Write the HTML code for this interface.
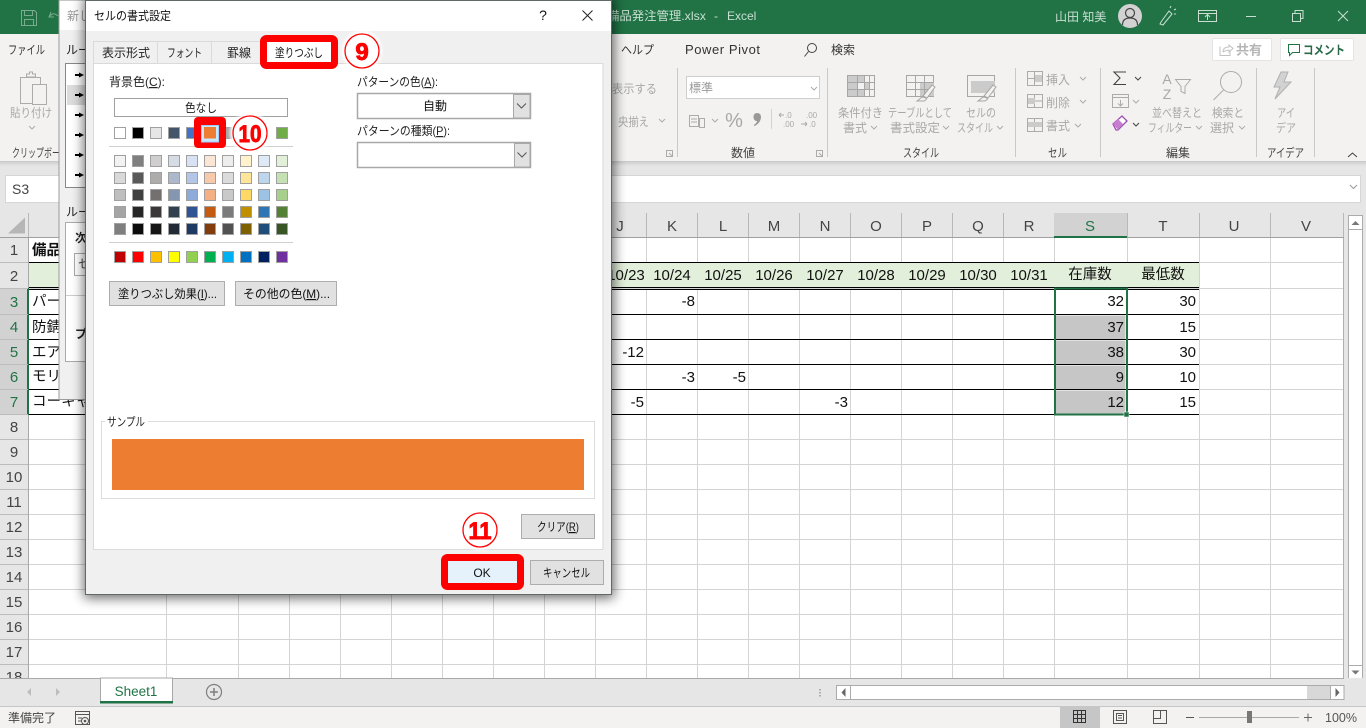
<!DOCTYPE html>
<html lang="ja"><head><meta charset="utf-8"><title>Excel</title>
<style>
html,body{margin:0;padding:0;width:1366px;height:728px;overflow:hidden;background:#e6e6e6}
svg{display:block;position:absolute;left:0;top:0}
text{font-family:"Liberation Sans","Noto Sans CJK JP",sans-serif;font-size:12px;fill:#222}
.m{text-anchor:middle}.e{text-anchor:end}
.d{fill:#a8a8a8}.g{font-size:12px;fill:#444}
.c{font-size:14.5px;fill:#111}.n{font-size:15px;fill:#111}
.rh{font-size:15px;fill:#444;text-anchor:middle}.sel{fill:#217346}
.ch{font-size:15px;fill:#444;text-anchor:middle}
.ic{fill:none;stroke:#ababab;stroke-width:1}
.cv{fill:none;stroke:#ababab;stroke-width:1}
.num{font-weight:bold;fill:#f00;stroke:#f00;stroke-width:.9;text-anchor:middle}
</style></head><body>
<svg width="1366" height="728" viewBox="0 0 1366 728" xmlns="http://www.w3.org/2000/svg">
<defs>
<filter id="sh" x="-10%" y="-10%" width="120%" height="120%"><feGaussianBlur stdDeviation="6"/></filter>
<filter id="ha" x="-30%" y="-30%" width="160%" height="160%"><feGaussianBlur stdDeviation="1.5"/></filter>
<linearGradient id="rs" x1="0" y1="0" x2="0" y2="1"><stop offset="0" stop-color="#c9c9c9"/><stop offset="1" stop-color="#e6e6e6"/></linearGradient>
</defs>

<rect width="1366" height="728" fill="#e6e6e6"/>
<rect width="1366" height="34" fill="#217346"/>
<rect y="34" width="1366" height="127" fill="#f3f2f1"/>
<rect y="161" width="1366" height="5" fill="url(#rs)"/>

<!-- title bar -->
<path d="M21.5 10.5h13l2 2v13h-15zM24.5 10.5v5h8v-5M24.500 25.500v-6h9v6" fill="none" stroke="#79ab8e"/>
<path d="M51 12l-2 5h5M49 17c3-4 6-4 9-1" fill="none" stroke="#79ab8e"/>
<text x="607" y="20" style="fill:#c9dfd2" textLength="99" lengthAdjust="spacingAndGlyphs">備品発注管理.xlsx</text>
<text x="714" y="20" style="fill:#c9dfd2">-</text>
<text x="727" y="20" style="fill:#c9dfd2">Excel</text>
<text x="1055" y="21" style="fill:#c9dfd2">山田 知美</text>
<circle cx="1130" cy="16" r="12" fill="#d2d2d2"/>
<circle cx="1130" cy="13" r="4.5" fill="none" stroke="#444" stroke-width="1.2"/>
<path d="M1122.5 25c0-5 3-7 7.5-7s7.500 2 7.500 7" fill="none" stroke="#444" stroke-width="1.2"/>
<path d="M1161 22l8-11 3 3-9 11-3-1zM1170 8l1-2M1174 10l2-1M1174 14h2" fill="none" stroke="#c9dfd2"/>
<path d="M1198.500 10.500h18v11h-18zM1198.500 13.500h18M1207.500 20v-5M1205 17l2.500-2.500 2.500 2.500" fill="none" stroke="#c9dfd2"/>
<path d="M1246 16.500h10" stroke="#c9dfd2" fill="none"/>
<path d="M1292.500 13.500h8v8h-8zM1295 13v-2.500h8v8h-2.500" stroke="#c9dfd2" fill="none"/>
<path d="M1338 11l10 10M1348 11l-10 10" stroke="#c9dfd2" fill="none"/>

<!-- tabs -->
<text x="8" y="54" style="fill:#333" textLength="37" lengthAdjust="spacingAndGlyphs">ファイル</text>
<text x="621" y="54" style="fill:#333" textLength="33" lengthAdjust="spacingAndGlyphs">ヘルプ</text>
<text x="685" y="54" style="font-size:13px;fill:#333" textLength="75">Power Pivot</text>
<circle cx="812" cy="48" r="4.500" fill="none" stroke="#444"/><path d="M808.500 51.500l-4 5" stroke="#444" fill="none"/>
<text x="831" y="54" style="fill:#333">検索</text>
<rect x="1212.500" y="38.500" width="59" height="22" rx="1" fill="#fff" stroke="#e4e4e4"/>
<path d="M1220 46.500v9h10v-4M1223 52c0-4 3-5 6-5v-2l4 3.500-4 3.500v-2c-3 0-4 1-6 2" fill="none" stroke="#c2c2c2"/>
<text x="1236" y="54.500" style="font-weight:bold;fill:#b5b5b5;font-size:13px">共有</text>
<rect x="1280.500" y="38.500" width="73" height="22" rx="1" fill="#fff" stroke="#e4e4e4"/>
<path d="M1288.500 44.500h11v8h-7l-3 3v-3h-1z" fill="none" stroke="#217346"/>
<text x="1303" y="54.500" style="font-weight:bold;fill:#2a6a48;font-size:12.500px" textLength="42" lengthAdjust="spacingAndGlyphs">コメント</text>

<!-- ribbon left -->
<path d="M20.500 77.500h20v26h-20z" class="ic"/><path d="M26.500 77v-3h3v-2h3v2h3v3z" class="ic"/>
<rect x="32.500" y="84.500" width="14" height="20" fill="#f3f2f1" stroke="#ababab"/>
<text x="10" y="117" class="d" textLength="42" lengthAdjust="spacingAndGlyphs">貼り付け</text>
<path d="M29 126l3 3 3-3" class="cv"/>
<text x="12" y="157" class="g" textLength="56" lengthAdjust="spacingAndGlyphs">クリップボード</text>

<!-- ribbon middle -->
<text x="612" y="93" class="d" textLength="45" lengthAdjust="spacingAndGlyphs">表示する</text>
<text x="618" y="126" class="d" textLength="31" lengthAdjust="spacingAndGlyphs">央揃え</text>
<path d="M659 119l3 3 3-3" class="cv"/>
<path d="M666.500 150.500h6v6h-6zM669 153l3 3" class="ic"/>
<path d="M677.500 68v89M827.500 68v89M1015.500 68v89M1100.500 68v89M1256.500 68v89M1314.500 68v89" stroke="#c9c9c9" fill="none"/>
<rect x="686.500" y="76.500" width="133" height="22" fill="#fff" stroke="#cfcfcf"/>
<text x="689" y="92" style="fill:#9a9a9a">標準</text>
<path d="M811 87l3 3 3-3" class="cv"/>
<path d="M689.500 115.500h9v11h-9zM699.500 118.500h5v9h-5zM691 119h6M691 122h6" class="ic"/>
<path d="M712 119l3 3 3-3" class="cv"/>
<text x="734" y="127" class="m d" style="font-size:20px">%</text>
<path d="M757 113c2.500 0 4 1.500 4 4 0 4-3 7.500-6.500 9l-.7-1c1.700-1 3-2.500 3.300-4-2 .2-3.600-1.400-3.600-4s1.500-4 3.500-4z" fill="#999"/>
<path d="M771.500 109v20" stroke="#d2d2d2" fill="none"/>
<text x="785" y="118" style="font-size:8px;fill:#a8a8a8">.0</text>
<text x="783" y="127" style="font-size:8px;fill:#a8a8a8">.00</text>
<path d="M779 115h5M779 115l2-2M779 115l2 2" class="ic"/>
<text x="806" y="118" style="font-size:8px;fill:#a8a8a8">.00</text>
<text x="809" y="127" style="font-size:8px;fill:#a8a8a8">.0</text>
<path d="M801 124h6M807 124l-2-2M807 124l-2 2" class="ic"/>
<text x="743" y="157" class="m g">数値</text>
<path d="M816.500 150.500h6v6h-6zM819 153l3 3" class="ic"/>

<!-- styles -->
<rect x="847.500" y="75.500" width="27" height="21" fill="#f3f2f1" stroke="#a6a6a6"/>
<path d="M848 76h16v7h-16zM848 83h10v7h-10zM848 90h16v6h-16zM864 83h5v7h-5z" fill="#cbcbcb"/>
<path d="M847.500 82.500h27M847.500 89.500h27M857.500 75.500v21M864.500 75.500v21M869.500 75.500v21" stroke="#a6a6a6" fill="none"/>
<rect x="906.500" y="75.500" width="27" height="21" fill="#f3f2f1" stroke="#a6a6a6"/>
<path d="M920 83h14v13h-14z" fill="#cbcbcb"/>
<path d="M906.500 82.500h27M906.500 89.500h27M915.500 75.500v21M924.500 75.500v21" stroke="#a6a6a6" fill="none"/>
<path d="M923 96l9-11 3 2-8 11zM923 97c-2 0-3 2-6 4h7c2-1 3-2 2-3z" fill="#f3f2f1" stroke="#a6a6a6"/>
<rect x="967.500" y="75.500" width="27" height="21" fill="#f3f2f1" stroke="#a6a6a6"/>
<path d="M971 81h24v12h-24z" fill="#cbcbcb"/>
<path d="M984 96l9-11 3 2-8 11zM984 97c-2 0-3 2-6 4h7c2-1 3-2 2-3z" fill="#f3f2f1" stroke="#a6a6a6"/>
<text x="838" y="117" class="d" textLength="45" lengthAdjust="spacingAndGlyphs">条件付き</text>
<text x="843" y="132" class="d">書式</text><path d="M871 126l3 3 3-3" class="cv"/>
<text x="888" y="117" class="d" textLength="64" lengthAdjust="spacingAndGlyphs">テーブルとして</text>
<text x="890" y="132" class="d" textLength="50" lengthAdjust="spacingAndGlyphs">書式設定</text><path d="M943 126l3 3 3-3" class="cv"/>
<text x="966" y="117" class="d" textLength="30" lengthAdjust="spacingAndGlyphs">セルの</text>
<text x="957" y="132" class="d" textLength="36" lengthAdjust="spacingAndGlyphs">スタイル</text><path d="M997 126l3 3 3-3" class="cv"/>
<text x="903" y="157" class="g" textLength="36" lengthAdjust="spacingAndGlyphs">スタイル</text>

<!-- cells -->
<path d="M1027.500 71.500h15v14h-15zM1027.500 78.500h15M1034.500 71.500v14" class="ic"/><rect x="1035" y="75" width="7" height="7" fill="#cbcbcb"/>
<text x="1046" y="84" class="d">挿入</text><path d="M1080 77l3 3 3-3" class="cv"/>
<path d="M1027.500 94.500h15v13h-15zM1027.500 101h15M1034.500 94.500v13" class="ic"/><rect x="1028" y="98" width="7" height="6" fill="#cbcbcb"/>
<text x="1046" y="107" class="d">削除</text><path d="M1080 100l3 3 3-3" class="cv"/>
<path d="M1027.500 118.500h15v13h-15zM1027.500 125h15M1034.500 118.500v13" class="ic"/><rect x="1028" y="122" width="14" height="5" fill="#cbcbcb"/>
<text x="1046" y="130" class="d">書式</text><path d="M1075 124l3 3 3-3" class="cv"/>
<text x="1048" y="157" class="g" textLength="19" lengthAdjust="spacingAndGlyphs">セル</text>

<!-- editing -->
<path d="M1126 72h-12l6 6-6 6.500h12" fill="none" stroke="#444" stroke-width="1.100"/>
<path d="M1135 77l3 3 3-3" fill="none" stroke="#444"/>
<path d="M1112.500 94.500h16v13h-16zM1112.500 97.500h16M1120.500 100v6M1118 103.500l2.500 2.500 2.500-2.500" class="ic"/>
<path d="M1133 100l3 3 3-3" class="cv"/>
<path d="M1113 124l9-8 5 5-9 9h-2z" fill="#fff" stroke="#9c4fb0" stroke-width="1.300"/>
<path d="M1113 124l5-5 5 5-5 6z" fill="#c77fd2"/>
<path d="M1133 123l3 3 3-3" fill="none" stroke="#444"/>
<text x="1167" y="84" class="m d" style="font-size:14px">A</text>
<text x="1167" y="99" class="m d" style="font-size:14px">Z</text>
<path d="M1175.500 79.500h15l-5.500 7v7l-4-2v-5z" class="ic"/>
<circle cx="1231" cy="82" r="10.500" class="ic"/><path d="M1223.500 90l-10 10" class="ic"/>
<text x="1152" y="117" class="d" textLength="50" lengthAdjust="spacingAndGlyphs">並べ替えと</text>
<text x="1148" y="132" class="d" textLength="44" lengthAdjust="spacingAndGlyphs">フィルター</text><path d="M1196 126l3 3 3-3" class="cv"/>
<text x="1212" y="117" class="d" textLength="32" lengthAdjust="spacingAndGlyphs">検索と</text>
<text x="1210" y="132" class="d">選択</text><path d="M1239 126l3 3 3-3" class="cv"/>
<text x="1178" y="157" class="m g">編集</text>

<!-- ideas -->
<path d="M1288 72h-7l-7 15h6l-5 12 16-17h-7z" fill="#d2d2d2" stroke="#b0b0b0"/>
<text x="1277" y="117" class="d" textLength="18" lengthAdjust="spacingAndGlyphs">アイ</text>
<text x="1276" y="132" class="d" textLength="20" lengthAdjust="spacingAndGlyphs">デア</text>
<text x="1267" y="157" class="g" textLength="37" lengthAdjust="spacingAndGlyphs">アイデア</text>
<path d="M1348 157l4.500-4 4.500 4" fill="none" stroke="#444"/>

<!-- formula bar -->
<rect x="5.500" y="175.500" width="1355" height="27" fill="#fff" stroke="#d6d6d6"/>
<text x="12" y="194" style="font-size:14px;fill:#444">S3</text>
<path d="M1350 185l3.500 3.500 3.500-3.500" fill="none" stroke="#999"/>

<!-- grid -->
<rect x="29" y="238" width="1314" height="440" fill="#fff"/>
<path d="M166.500 238v440M238.500 238v440M289.500 238v440M340.500 238v440M391.500 238v440M442.500 238v440M493.500 238v440M544.500 238v440M595.500 238v440M646.500 238v440M697.500 238v440M748.500 238v440M799.500 238v440M850.500 238v440M901.500 238v440M952.500 238v440M1003.500 238v440M1054.500 238v440M1127.500 238v440M1199.500 238v440M1270.500 238v440M1343.500 238v440" stroke="#d4d4d4" fill="none"/>
<path d="M29 262.500h1314M29 288.500h1314M29 314.500h1314M29 339.500h1314M29 364.500h1314M29 389.500h1314M29 414.500h1314M29 439.500h1314M29 464.500h1314M29 489.500h1314M29 514.500h1314M29 539.500h1314M29 564.500h1314M29 589.500h1314M29 614.500h1314M29 639.500h1314M29 664.500h1314" stroke="#d4d4d4" fill="none"/>
<rect x="29" y="263" width="1170" height="25" fill="#e2efda"/>
<rect x="1056" y="315.500" width="69.500" height="23.500" fill="#c6c6c6"/>
<rect x="1056" y="340.500" width="69.500" height="23.500" fill="#c6c6c6"/>
<rect x="1056" y="365.500" width="69.500" height="23.500" fill="#c6c6c6"/>
<rect x="1056" y="390.500" width="69.500" height="23" fill="#c6c6c6"/>
<path d="M29 262.500h1170M29 287.500h1170M29 289.500h1170M29 314.500h1170M29 339.500h1170M29 364.500h1170M29 389.500h1170M29 414.500h1170" stroke="#000" fill="none"/>

<!-- col headers -->
<rect x="0" y="213" width="1343" height="24" fill="#e6e6e6"/>
<path d="M28.500 213v25M646.500 213v24M697.500 213v24M748.500 213v24M799.500 213v24M850.500 213v24M901.500 213v24M952.500 213v24M1003.500 213v24M1054.500 213v24M1127.500 213v24M1199.500 213v24M1270.500 213v24M1343.500 213v24" stroke="#b8b8b8" fill="none"/>
<path d="M0 237.500h1344" stroke="#a0a0a0" fill="none"/>
<rect x="1054" y="213" width="73" height="24" fill="#d2d2d2"/>
<rect x="1054" y="236" width="73" height="2" fill="#217346"/>
<path d="M25 233.500h-17l17-16z" fill="#b6b6b6"/>
<text x="620" y="231" class="ch">J</text><text x="672" y="231" class="ch">K</text><text x="723" y="231" class="ch">L</text><text x="774" y="231" class="ch">M</text><text x="825" y="231" class="ch">N</text><text x="876" y="231" class="ch">O</text><text x="927" y="231" class="ch">P</text><text x="978" y="231" class="ch">Q</text><text x="1029" y="231" class="ch">R</text>
<text x="1090" y="231" class="ch sel" style="fill:#217346">S</text>
<text x="1163" y="231" class="ch">T</text><text x="1234" y="231" class="ch">U</text><text x="1306" y="231" class="ch">V</text>

<!-- row headers -->
<rect x="0" y="238" width="28" height="440" fill="#e6e6e6"/>
<rect x="0" y="289" width="27" height="126" fill="#d2d2d2"/>
<rect x="27" y="288" width="2" height="127" fill="#217346"/>
<path d="M28.500 238v50M28.500 415v263" stroke="#a8a8a8" fill="none"/>
<path d="M0 262.500h28M0 288.500h28M0 314.500h28M0 339.500h28M0 364.500h28M0 389.500h28M0 414.500h28M0 439.500h28M0 464.500h28M0 489.500h28M0 514.500h28M0 539.500h28M0 564.500h28M0 589.500h28M0 614.500h28M0 639.500h28M0 664.500h28" stroke="#bcbcbc" fill="none"/>
<text x="14" y="255" class="rh">1</text><text x="14" y="281" class="rh">2</text>
<text x="14" y="307" class="rh" style="fill:#217346">3</text><text x="14" y="332" class="rh" style="fill:#217346">4</text><text x="14" y="357" class="rh" style="fill:#217346">5</text><text x="14" y="382" class="rh" style="fill:#217346">6</text><text x="14" y="407" class="rh" style="fill:#217346">7</text>
<text x="14" y="432" class="rh">8</text><text x="14" y="457" class="rh">9</text><text x="14" y="482" class="rh">10</text><text x="14" y="507" class="rh">11</text><text x="14" y="532" class="rh">12</text><text x="14" y="557" class="rh">13</text><text x="14" y="582" class="rh">14</text><text x="14" y="607" class="rh">15</text><text x="14" y="632" class="rh">16</text><text x="14" y="657" class="rh">17</text><text x="14" y="682" class="rh">18</text>

<!-- cell text -->
<text x="32" y="255" class="c" style="font-weight:bold">備品</text>
<text x="32" y="306" class="c">パー</text><text x="32" y="332" class="c">防錆</text><text x="32" y="357" class="c">エア</text><text x="32" y="381" class="c">モリ</text><text x="32" y="406" class="c">コーキャ</text>
<text x="626" y="280" class="n m">10/23</text><text x="672" y="280" class="n m">10/24</text><text x="723" y="280" class="n m">10/25</text><text x="774" y="280" class="n m">10/26</text><text x="825" y="280" class="n m">10/27</text><text x="876" y="280" class="n m">10/28</text><text x="927" y="280" class="n m">10/29</text><text x="978" y="280" class="n m">10/30</text><text x="1029" y="280" class="n m">10/31</text>
<text x="1090" y="279" class="c m">在庫数</text><text x="1163" y="279" class="c m">最低数</text>
<text x="695" y="306" class="n e">-8</text><text x="644" y="357" class="n e">-12</text><text x="695" y="382" class="n e">-3</text><text x="746" y="382" class="n e">-5</text><text x="644" y="407" class="n e">-5</text><text x="848" y="407" class="n e">-3</text>
<text x="1124" y="306" class="n e">32</text><text x="1124" y="332" class="n e">37</text><text x="1124" y="357" class="n e">38</text><text x="1124" y="382" class="n e">9</text><text x="1124" y="407" class="n e">12</text>
<text x="1196" y="306" class="n e">30</text><text x="1196" y="332" class="n e">15</text><text x="1196" y="357" class="n e">30</text><text x="1196" y="382" class="n e">10</text><text x="1196" y="407" class="n e">15</text>
<rect x="1055" y="288.500" width="72" height="126" fill="none" stroke="#217346" stroke-width="2"/>
<rect x="1124" y="412" width="5" height="5" fill="#217346" stroke="#fff" stroke-width=".5"/>

<!-- v scrollbar -->
<rect x="1344" y="213" width="22" height="468" fill="#e6e6e6"/>
<path d="M1343.500 238v440" stroke="#b0b0b0" fill="none"/>
<rect x="1348.500" y="215.500" width="14" height="461" fill="#fff" stroke="#ababab"/>
<rect x="1348.500" y="215.500" width="14" height="14" fill="#fff" stroke="#ababab"/>
<path d="M1351.500 225h8l-4-4z" fill="#777"/>
<rect x="1348.500" y="665.500" width="14" height="14" fill="#fff" stroke="#ababab"/>
<path d="M1351.500 670.500h8l-4 4z" fill="#777"/>

<!-- sheet tab bar -->
<rect y="678" width="1366" height="28" fill="#e6e6e6"/>
<path d="M0 678.500h1344" stroke="#a8a8a8" fill="none"/>
<rect x="100.500" y="678" width="72" height="24" fill="#fff" stroke="#a8a8a8"/>
<rect x="100" y="701" width="73" height="2.500" fill="#217346"/>
<text x="136" y="696" class="m" style="font-size:13.500px;fill:#217346">Sheet1</text>
<path d="M31 688v8l-4-4zM56 688v8l4-4z" fill="#bdbdbd"/>
<circle cx="214" cy="692" r="7.500" fill="none" stroke="#7f7f7f" stroke-width="1.200"/>
<path d="M214 688v8M210 692h8" stroke="#7f7f7f" stroke-width="1.500" fill="none"/>
<path d="M820 689v1.500M820 692v1.500M820 695v1.500" stroke="#999" stroke-width="1.500" fill="none"/>
<rect x="836.500" y="685.500" width="507" height="14" fill="#d8d8d8" stroke="#ababab"/>
<rect x="851" y="686" width="456" height="13" fill="#fff"/>
<rect x="836.500" y="685.500" width="14" height="14" fill="#fff" stroke="#ababab"/>
<path d="M845.500 688v9l-4-4.500z" fill="#666"/>
<rect x="1330.500" y="685.500" width="13.500" height="14" fill="#fff" stroke="#ababab"/>
<path d="M1335.500 688v9l4-4.500z" fill="#666"/>

<!-- status bar -->
<rect y="706" width="1366" height="22" fill="#f3f2f1"/>
<path d="M0 706.500h1366" stroke="#c6c6c6" fill="none"/>
<text x="8" y="722" style="fill:#444">準備完了</text>
<path d="M75.500 711.500h14v13h-14zM75.500 714.500h14M78 718h4M78 721h3" fill="none" stroke="#555"/>
<circle cx="85" cy="721" r="3.500" fill="#f3f2f1" stroke="#555"/><circle cx="85" cy="721" r="1.300" fill="#555"/>
<rect x="1060" y="707" width="40" height="21" fill="#c6c6c6"/>
<path d="M1073.500 710.500h12v12h-12zM1073.500 714.500h12M1073.500 718.500h12M1077.500 710.500v12M1081.500 710.500v12" fill="none" stroke="#333"/>
<path d="M1113.500 710.500h13v13h-13zM1116.500 713.500h7v7h-7zM1118 715.500h4M1118 718h4" fill="none" stroke="#555"/>
<path d="M1153.500 710.500h13v13h-13zM1153.500 718.500h7v-8M1160.500 718v-7.500" fill="none" stroke="#555"/>
<path d="M1186 717.500h8" stroke="#555" fill="none"/>
<path d="M1199 717.500h100" stroke="#a8a8a8" fill="none"/>
<rect x="1247" y="711" width="5" height="12" fill="#777"/>
<path d="M1304 717.500h8M1308 713.500v8" stroke="#666" fill="none"/>
<text x="1325" y="722" style="fill:#555;font-size:12.500px">100%</text>

<!-- back dialog -->
<rect x="59" y="0" width="40" height="399.500" fill="#f0f0f0" stroke="#9b9b9b"/>
<rect x="59.500" y="1" width="40" height="29" fill="#fff"/>
<text x="67" y="20" style="fill:#999">新し</text>
<text x="66" y="54">ルー</text>
<rect x="65.500" y="63.500" width="30" height="124" fill="#fff" stroke="#888"/>
<rect x="67" y="85" width="25" height="20" fill="#dcdcdc"/>
<path d="M75 74h4v-1.500l5 2.500-5 2.500v-1.500h-4zM75 94h4v-1.500l5 2.500-5 2.500v-1.500h-4zM75 114h4v-1.500l5 2.500-5 2.500v-1.500h-4zM75 134h4v-1.500l5 2.500-5 2.500v-1.500h-4zM75 154h4v-1.500l5 2.500-5 2.500v-1.500h-4zM75 174h4v-1.500l5 2.500-5 2.500v-1.500h-4z" fill="#000"/>
<text x="66" y="216">ルー</text>
<rect x="65.500" y="222.500" width="30" height="139" fill="#fff" stroke="#aaa"/>
<text x="75" y="242" style="font-weight:bold">次</text>
<rect x="74.500" y="253.500" width="20" height="22" fill="#fff" stroke="#aaa"/>
<text x="78" y="268" style="fill:#444">セ</text>
<path d="M66 295.500h30" stroke="#ccc" fill="none"/>
<text x="75" y="338" style="font-weight:bold">プ</text>

<!-- main dialog shadow -->
<rect x="84" y="-4" width="530" height="602" fill="#000" opacity=".6" filter="url(#sh)"/>
<rect x="85.500" y="0.500" width="526" height="594" fill="#f0f0f0" stroke="#5f6a64"/>
<rect x="86" y="1" width="525" height="30" fill="#fff"/>
<text x="94" y="20" style="fill:#111" textLength="77" lengthAdjust="spacingAndGlyphs">セルの書式設定</text>
<text x="543" y="20" class="m" style="font-size:14px;fill:#111">?</text>
<path d="M582.500 10.500l10 10M592.500 10.500l-10 10" stroke="#222" fill="none"/>

<!-- tabs -->
<path d="M93.500 63v-21.500h64v21.500M157.500 41.500h54v21.500M211.500 41.500h50" fill="none" stroke="#dadada"/>
<rect x="93.500" y="63.500" width="509.500" height="486" fill="#fff" stroke="#dadada"/>
<text x="102" y="57">表示形式</text><text x="167" y="57" textLength="35" lengthAdjust="spacingAndGlyphs">フォント</text><text x="227" y="57">罫線</text>
<rect x="263.500" y="38.500" width="71" height="27" rx="3" fill="#fff" stroke="#f00" stroke-width="7"/>
<text x="275" y="57" style="fill:#111" textLength="48" lengthAdjust="spacingAndGlyphs">塗りつぶし</text>
<circle cx="362" cy="51" r="20" fill="#fff" filter="url(#ha)"/>
<circle cx="362" cy="51" r="17" fill="#fff" stroke="#f00" stroke-width="1.300"/>
<text x="362" y="60" class="num" style="font-size:24px">9</text>

<!-- panel left -->
<text x="109" y="86">背景色(<tspan text-decoration="underline">C</tspan>):</text>
<rect x="114.500" y="98.500" width="173" height="18" fill="#fff" stroke="#a0a0a0"/>
<text x="185" y="112" textLength="32" lengthAdjust="spacingAndGlyphs">色なし</text>
<g stroke="#a0a0a0">
<rect x="114.500" y="127.500" width="11" height="11" fill="#fff"/><rect x="132.500" y="127.500" width="11" height="11" fill="#000"/><rect x="150.500" y="127.500" width="11" height="11" fill="#e7e6e6"/><rect x="168.500" y="127.500" width="11" height="11" fill="#44546a"/><rect x="186.500" y="127.500" width="11" height="11" fill="#4472c4"/><rect x="222.500" y="127.500" width="11" height="11" fill="#a5a5a5"/><rect x="276.500" y="127.500" width="11" height="11" fill="#70ad47"/>
<rect x="114.500" y="155.500" width="11" height="11" fill="#f2f2f2"/><rect x="132.500" y="155.500" width="11" height="11" fill="#7f7f7f"/><rect x="150.500" y="155.500" width="11" height="11" fill="#d0cece"/><rect x="168.500" y="155.500" width="11" height="11" fill="#d6dce4"/><rect x="186.500" y="155.500" width="11" height="11" fill="#d9e2f3"/><rect x="204.500" y="155.500" width="11" height="11" fill="#fbe5d5"/><rect x="222.500" y="155.500" width="11" height="11" fill="#ededed"/><rect x="240.500" y="155.500" width="11" height="11" fill="#fff2cc"/><rect x="258.500" y="155.500" width="11" height="11" fill="#deeaf6"/><rect x="276.500" y="155.500" width="11" height="11" fill="#e2efd9"/>
<rect x="114.500" y="172.500" width="11" height="11" fill="#d9d9d9"/><rect x="132.500" y="172.500" width="11" height="11" fill="#595959"/><rect x="150.500" y="172.500" width="11" height="11" fill="#aeabab"/><rect x="168.500" y="172.500" width="11" height="11" fill="#adb9ca"/><rect x="186.500" y="172.500" width="11" height="11" fill="#b4c6e7"/><rect x="204.500" y="172.500" width="11" height="11" fill="#f7caac"/><rect x="222.500" y="172.500" width="11" height="11" fill="#dbdbdb"/><rect x="240.500" y="172.500" width="11" height="11" fill="#fee599"/><rect x="258.500" y="172.500" width="11" height="11" fill="#bdd6ee"/><rect x="276.500" y="172.500" width="11" height="11" fill="#c5e0b3"/>
<rect x="114.500" y="189.500" width="11" height="11" fill="#bfbfbf"/><rect x="132.500" y="189.500" width="11" height="11" fill="#404040"/><rect x="150.500" y="189.500" width="11" height="11" fill="#757070"/><rect x="168.500" y="189.500" width="11" height="11" fill="#8496b0"/><rect x="186.500" y="189.500" width="11" height="11" fill="#8eaadb"/><rect x="204.500" y="189.500" width="11" height="11" fill="#f4b083"/><rect x="222.500" y="189.500" width="11" height="11" fill="#c9c9c9"/><rect x="240.500" y="189.500" width="11" height="11" fill="#ffd965"/><rect x="258.500" y="189.500" width="11" height="11" fill="#9cc2e5"/><rect x="276.500" y="189.500" width="11" height="11" fill="#a8d08d"/>
<rect x="114.500" y="206.500" width="11" height="11" fill="#a5a5a5"/><rect x="132.500" y="206.500" width="11" height="11" fill="#262626"/><rect x="150.500" y="206.500" width="11" height="11" fill="#3a3838"/><rect x="168.500" y="206.500" width="11" height="11" fill="#323f4f"/><rect x="186.500" y="206.500" width="11" height="11" fill="#2f5496"/><rect x="204.500" y="206.500" width="11" height="11" fill="#c55a11"/><rect x="222.500" y="206.500" width="11" height="11" fill="#7b7b7b"/><rect x="240.500" y="206.500" width="11" height="11" fill="#bf8f00"/><rect x="258.500" y="206.500" width="11" height="11" fill="#2e75b5"/><rect x="276.500" y="206.500" width="11" height="11" fill="#538135"/>
<rect x="114.500" y="223.500" width="11" height="11" fill="#7f7f7f"/><rect x="132.500" y="223.500" width="11" height="11" fill="#0c0c0c"/><rect x="150.500" y="223.500" width="11" height="11" fill="#171616"/><rect x="168.500" y="223.500" width="11" height="11" fill="#222a35"/><rect x="186.500" y="223.500" width="11" height="11" fill="#1f3864"/><rect x="204.500" y="223.500" width="11" height="11" fill="#833c0b"/><rect x="222.500" y="223.500" width="11" height="11" fill="#525252"/><rect x="240.500" y="223.500" width="11" height="11" fill="#7f6000"/><rect x="258.500" y="223.500" width="11" height="11" fill="#1e4e79"/><rect x="276.500" y="223.500" width="11" height="11" fill="#375623"/>
<rect x="114.500" y="251.500" width="11" height="11" fill="#c00000"/><rect x="132.500" y="251.500" width="11" height="11" fill="#ff0000"/><rect x="150.500" y="251.500" width="11" height="11" fill="#ffc000"/><rect x="168.500" y="251.500" width="11" height="11" fill="#ffff00"/><rect x="186.500" y="251.500" width="11" height="11" fill="#92d050"/><rect x="204.500" y="251.500" width="11" height="11" fill="#00b050"/><rect x="222.500" y="251.500" width="11" height="11" fill="#00b0f0"/><rect x="240.500" y="251.500" width="11" height="11" fill="#0070c0"/><rect x="258.500" y="251.500" width="11" height="11" fill="#002060"/><rect x="276.500" y="251.500" width="11" height="11" fill="#7030a0"/>
</g>
<path d="M109 146.500h184M109 242.500h184" stroke="#d0d0d0" fill="none"/>
<rect x="194" y="117" width="32" height="31" rx="4" fill="#f00"/>
<rect x="201.500" y="125.500" width="17" height="16.500" fill="#cce8ff" stroke="#99d1ff"/>
<rect x="204" y="127" width="12" height="11.500" fill="#ed7d31"/>
<circle cx="250" cy="133" r="20" fill="#fff" filter="url(#ha)"/>
<circle cx="250" cy="133" r="17" fill="#fff" stroke="#f00" stroke-width="1.300"/>
<text x="250" y="142" class="num" style="font-size:24px" textLength="23" lengthAdjust="spacingAndGlyphs">10</text>
<rect x="109.500" y="281.500" width="115" height="24" fill="#e1e1e1" stroke="#adadad"/>
<text x="118" y="298" style="fill:#111" textLength="99" lengthAdjust="spacingAndGlyphs">塗りつぶし効果(<tspan text-decoration="underline">I</tspan>)...</text>
<rect x="235.500" y="281.500" width="101" height="24" fill="#e1e1e1" stroke="#adadad"/>
<text x="243" y="298" style="fill:#111" textLength="87" lengthAdjust="spacingAndGlyphs">その他の色(<tspan text-decoration="underline">M</tspan>)...</text>

<!-- panel right -->
<text x="357" y="86" textLength="81" lengthAdjust="spacingAndGlyphs">パターンの色(<tspan text-decoration="underline">A</tspan>):</text>
<rect x="357.500" y="93.500" width="173" height="25" fill="#fff" stroke="#a8a8a8" stroke-width="1.500"/>
<rect x="513.500" y="94.500" width="16.500" height="23.500" fill="#e1e1e1" stroke="#a8a8a8"/>
<path d="M517 103.500l4.500 4.500 4.500-4.500" fill="none" stroke="#555"/>
<text x="435" y="110" class="m" style="fill:#111">自動</text>
<text x="357" y="135" textLength="93" lengthAdjust="spacingAndGlyphs">パターンの種類(<tspan text-decoration="underline">P</tspan>):</text>
<rect x="357.500" y="142.500" width="173" height="25" fill="#fff" stroke="#a8a8a8" stroke-width="1.500"/>
<rect x="514.500" y="143.500" width="15.500" height="23.500" fill="#e1e1e1" stroke="#a8a8a8"/>
<path d="M517.500 152.500l4.500 4.500 4.500-4.500" fill="none" stroke="#555"/>

<!-- sample -->
<rect x="101.500" y="421.500" width="493" height="77" fill="#fff" stroke="#dcdcdc"/>
<rect x="105" y="415" width="43" height="14" fill="#fff"/>
<text x="107" y="426" textLength="38" lengthAdjust="spacingAndGlyphs">サンプル</text>
<rect x="112" y="439" width="472" height="51" fill="#ed7d31"/>

<!-- bottom buttons -->
<rect x="521.500" y="514.500" width="73" height="24" fill="#e1e1e1" stroke="#adadad"/>
<text x="537" y="531" style="fill:#111" textLength="42" lengthAdjust="spacingAndGlyphs">クリア(<tspan text-decoration="underline">R</tspan>)</text>
<circle cx="480" cy="530" r="20" fill="#fff" filter="url(#ha)"/>
<circle cx="480" cy="530" r="17" fill="#fff" stroke="#f00" stroke-width="1.300"/>
<text x="480" y="539" class="num" style="font-size:24px" textLength="23" lengthAdjust="spacingAndGlyphs">11</text>
<rect x="444.500" y="557.500" width="76" height="29" rx="3" fill="#e5f1fb" stroke="#f00" stroke-width="7"/>
<text x="482" y="577" class="m" style="fill:#111">OK</text>
<rect x="530.500" y="560.500" width="73" height="24" fill="#e1e1e1" stroke="#adadad"/>
<text x="543" y="577" style="fill:#111" textLength="47" lengthAdjust="spacingAndGlyphs">キャンセル</text>
</svg>
</body></html>
